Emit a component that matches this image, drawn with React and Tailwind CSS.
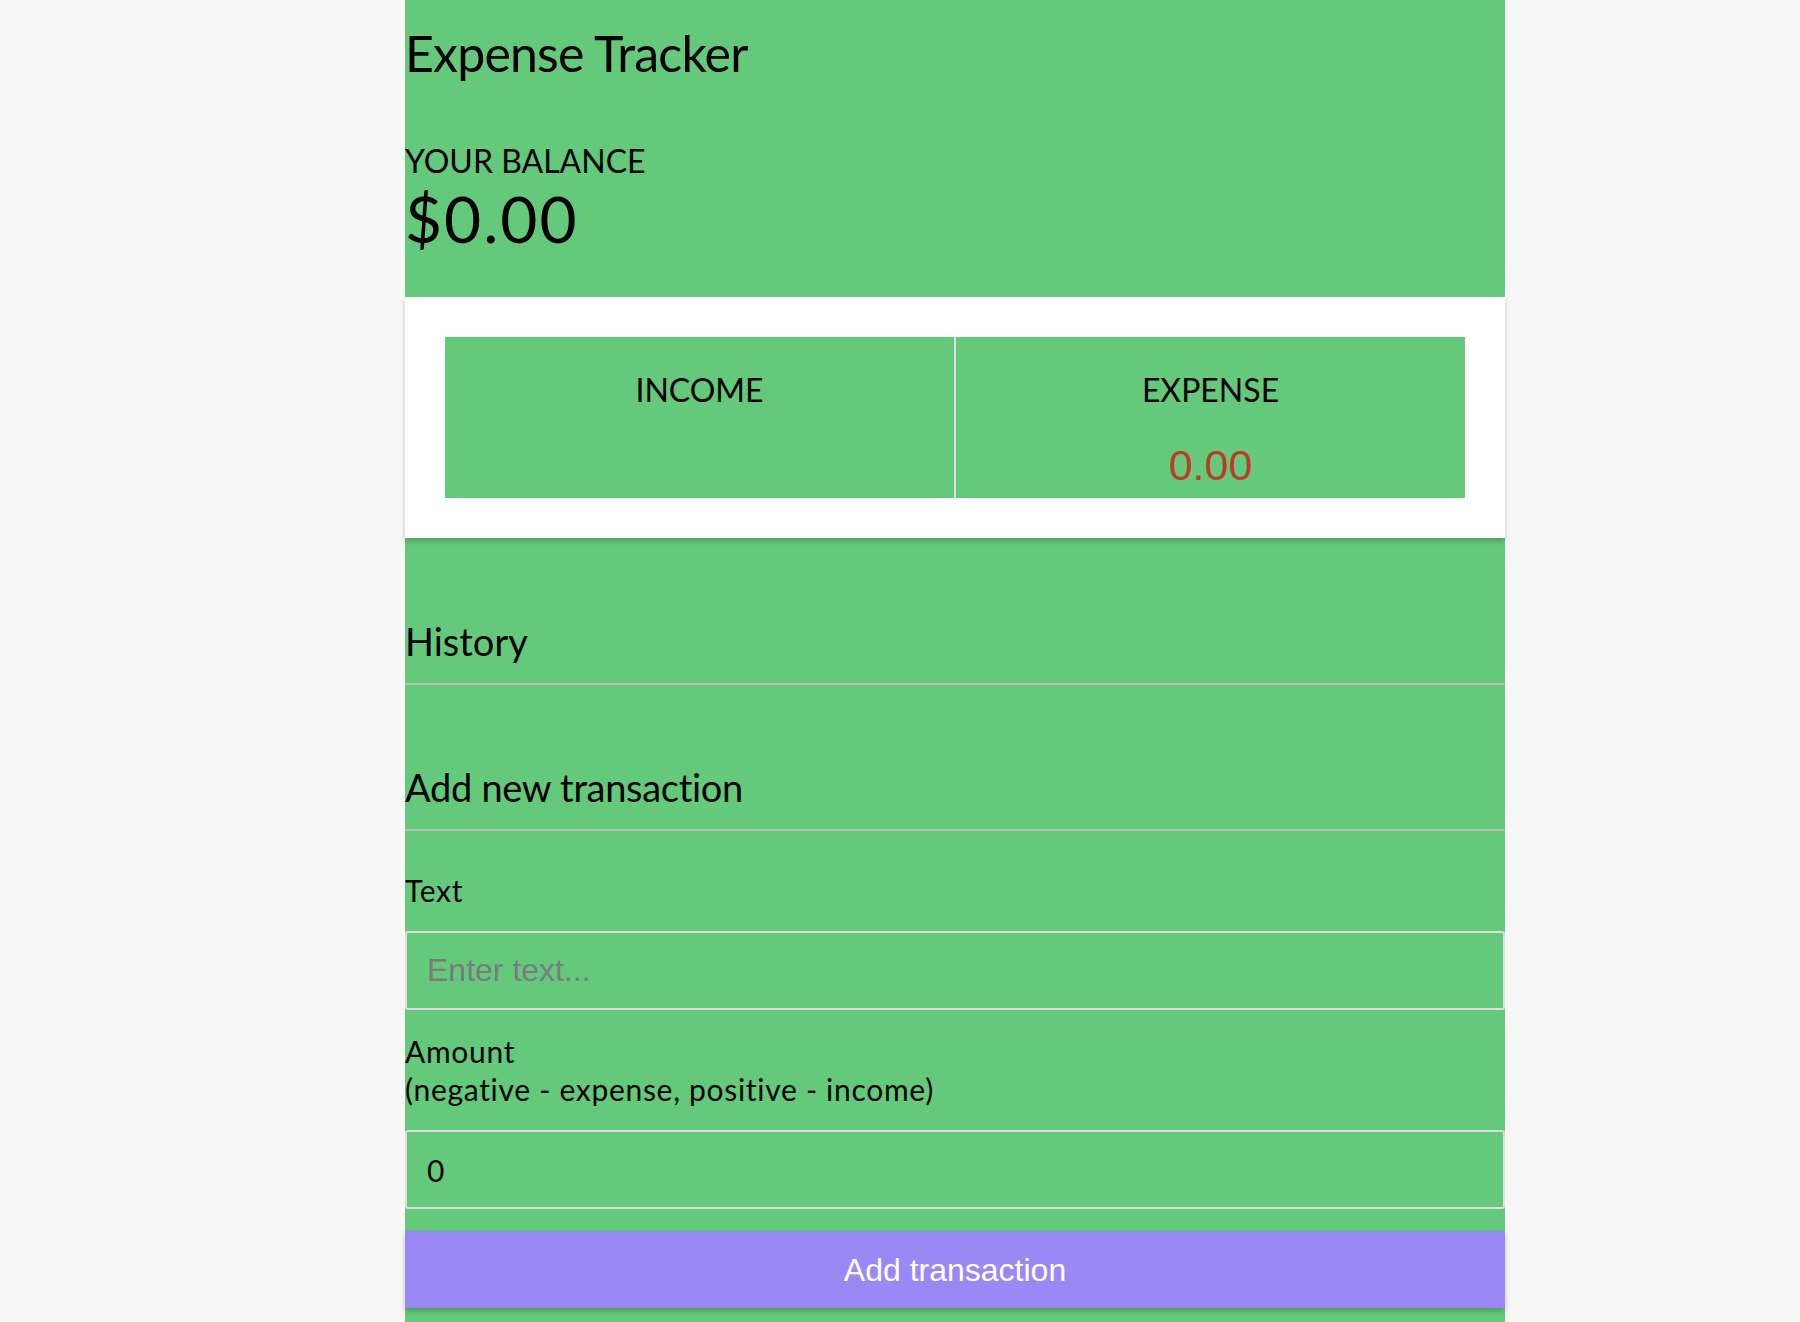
import React, { useState } from 'react';

const lato = "font-['Lato','Liberation_Sans',sans-serif]";
const arial = "font-['Liberation_Sans','Arial',sans-serif]";

const App = () => {
  const [text, setText] = useState('');
  const [amount, setAmount] = useState(0);

  return (
    <div className={`min-h-screen bg-[#f7f7f7] ${lato}`}>
      <div className="ml-[405px] w-[1100px] min-h-screen bg-[#64c97b] text-black">
        {/* Header */}
        <div className="pt-[23px] pb-[40px]">
          <h1 className="text-[50px] leading-[60px] font-normal tracking-[-0.8px]">Expense Tracker</h1>
          <h4 className="mt-[59px] text-[32px] leading-[38px] uppercase">Your Balance</h4>
          <h1 className="text-[64px] leading-[77px] tracking-[2px]">$0.00</h1>
        </div>

        {/* Income / Expense */}
        <div className="bg-white p-[40px] shadow-[0_3px_5px_rgba(0,0,0,0.22)]">
          <div className="flex h-[161px] bg-[#64c97b]">
            <div className="flex-1 text-center pt-[34px]">
              <h4 className="text-[32px] leading-[38px]">INCOME</h4>
            </div>
            <div className="w-[2px] bg-[#dddddd]"></div>
            <div className="flex-1 text-center pt-[34px]">
              <h4 className="text-[32px] leading-[38px]">EXPENSE</h4>
              <p className={`mt-[32px] text-[43px] leading-[48px] text-[#c0392b] ${arial}`}>0.00</p>
            </div>
          </div>
        </div>

        {/* History */}
        <h3 className="mt-[80px] pb-[19px] border-b-2 border-[#bbbbbb] text-[38px] leading-[46px]">History</h3>
        <ul></ul>

        {/* Add new transaction */}
        <h3 className="mt-[79px] pb-[19px] border-b-2 border-[#bbbbbb] text-[38px] leading-[46px] tracking-[-0.3px]">Add new transaction</h3>
        <form onSubmit={(e) => e.preventDefault()}>
          <div className="mt-[40px]">
            <label className="block text-[30px] leading-[38px] tracking-[0.7px]">Text</label>
            <input
              type="text"
              value={text}
              onChange={(e) => setText(e.target.value)}
              placeholder="Enter text..."
              className={`mt-[22px] block w-full h-[79px] px-[20px] border-2 border-[#dedede] rounded-[3px] bg-transparent text-[32px] placeholder:text-[#7b7b7b] outline-none ${arial}`}
            />
          </div>
          <div className="mt-[22px]">
            <label className="block text-[30px] leading-[38px] tracking-[0.7px]">
              Amount <br />
              (negative - expense, positive - income)
            </label>
            <input
              type="number"
              value={amount}
              onChange={(e) => setAmount(e.target.value)}
              placeholder="Enter amount..."
              className="mt-[22px] block w-full h-[79px] px-[20px] border-2 border-[#dedede] rounded-[3px] bg-transparent text-[30px] outline-none"
            />
          </div>
          <button className={`mt-[22px] block w-full h-[77px] bg-[#9a89f5] text-white text-[32px] shadow-[0_3px_5px_rgba(0,0,0,0.22)] ${arial}`}>
            Add transaction
          </button>
        </form>
      </div>
    </div>
  );
};

export default App;
